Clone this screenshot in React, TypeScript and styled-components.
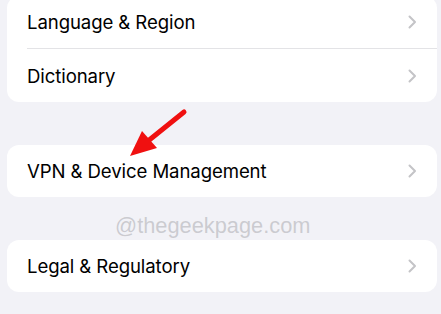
import React from "react";
import styled, { createGlobalStyle } from "styled-components";

const Global = createGlobalStyle`
  html, body { margin: 0; padding: 0; background: #f2f2f7; }
  body { width: 441px; height: 314px; overflow: hidden; }
`;

const Page = styled.div`
  position: relative;
  box-sizing: border-box;
  width: 441px;
  height: 314px;
  overflow: hidden;
  background: #f2f2f7;
  padding: 0 4px 0 7px;
  display: flex;
  flex-direction: column;
  gap: 43px;
  font-family: Inter, "Liberation Sans", sans-serif;
`;

const Group = styled.div<{ $offset?: number }>`
  background: #ffffff;
  border-radius: 12px;
  margin-top: ${(p) => p.$offset ?? 0}px;
  overflow: hidden;
`;

const Row = styled.div<{ $divider?: boolean }>`
  position: relative;
  height: 52px;
  display: flex;
  align-items: center;
  justify-content: space-between;
  padding: 0 20px 0 20px;
  ${(p) =>
    p.$divider &&
    `
    &::before {
      content: "";
      position: absolute;
      top: 0;
      left: 20px;
      right: 0;
      height: 1px;
      background: #e3e3e6;
    }
    height: 53px;
    padding-top: 1px;
  `}
`;

const Label = styled.span`
  font-size: 18.6px;
  color: #000;
  letter-spacing: -0.1px;
`;

const Chevron = () => (
  <svg width="9" height="14" viewBox="0 0 9 14">
    <path d="M1.5 1.5 L7 7 L1.5 12.5" fill="none" stroke="#c4c4c7" strokeWidth="2" strokeLinecap="round" strokeLinejoin="round" />
  </svg>
);

const Watermark = styled.div`
  position: absolute;
  left: 115px;
  top: 213px;
  font-family: "Liberation Sans", Arial, sans-serif;
  font-size: 21.8px;
  color: rgba(170, 170, 175, 0.55);
  pointer-events: none;
`;

const Arrow = styled.svg`
  position: absolute;
  left: 120px;
  top: 105px;
`;

const SettingsRow = ({ label, divider }: { label: string; divider?: boolean }) => (
  <Row $divider={divider}>
    <Label>{label}</Label>
    <Chevron />
  </Row>
);

export default function App() {
  return (
    <>
      <Global />
      <Page>
        <Group $offset={-4}>
          <SettingsRow label="Language & Region" />
          <SettingsRow label="Dictionary" divider />
        </Group>
        <Group>
          <SettingsRow label="VPN & Device Management" />
        </Group>
        <Group>
          <SettingsRow label="Legal & Regulatory" />
        </Group>
        <Watermark>@thegeekpage.com</Watermark>
        <Arrow width="75" height="60" viewBox="0 0 75 60">
          <line x1="64" y1="7" x2="28" y2="36" stroke="#f01010" strokeWidth="5" strokeLinecap="round" />
          <polygon points="10,51 22,26 37,43" fill="#f01010" />
        </Arrow>
      </Page>
    </>
  );
}
